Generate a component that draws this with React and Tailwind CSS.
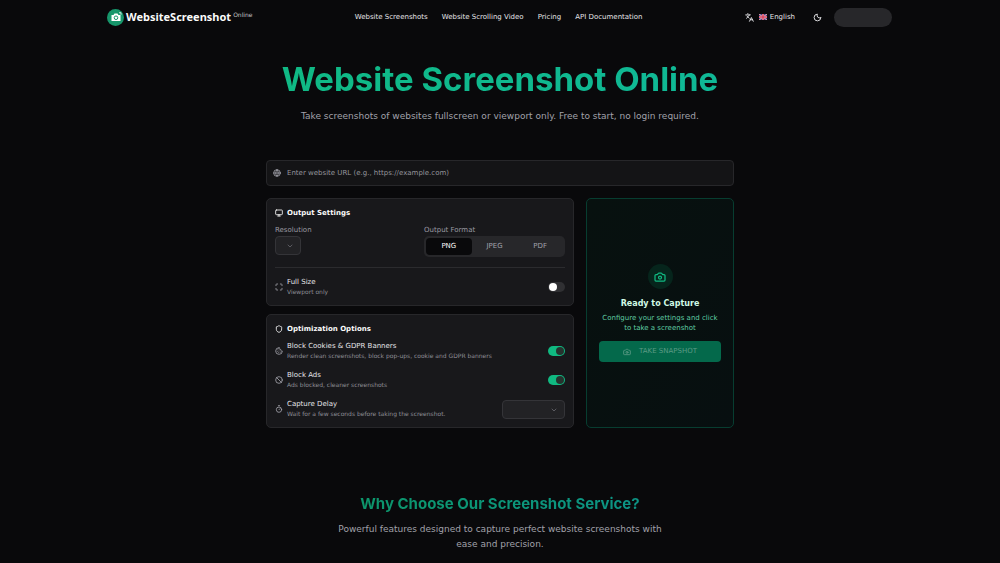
import React, { useState } from "react";
import { Camera, Languages, Moon, Globe, Monitor, ChevronDown, Maximize, Shield, Cookie, Ban, Timer } from "lucide-react";

const navLinks = ["Website Screenshots", "Website Scrolling Video", "Pricing", "API Documentation"];
const formats = ["PNG", "JPEG", "PDF"];

const Flag = () => (
    <svg viewBox="0 0 16 12" className="h-[6px] w-[8px]" aria-hidden="true">
        <path fill="#3b4a8c" d="M0 0h16v12H0z" />
        <path stroke="#f1e4ea" strokeWidth="2" d="M0 0l16 12M16 0L0 12" />
        <path stroke="#d8405c" strokeWidth="1" d="M0 0l16 12M16 0L0 12" />
        <path stroke="#f1e4ea" strokeWidth="4" d="M8 0v12M0 6h16" />
        <path stroke="#d8405c" strokeWidth="3" d="M8 0v12M0 6h16" />
    </svg>
);

const Toggle = ({ id, checked, onChange }) => (
    <input
        id={id}
        type="checkbox"
        role="switch"
        checked={checked}
        onChange={onChange}
        className="flex h-[10px] w-[17px] shrink-0 cursor-pointer appearance-none items-center rounded-full bg-[#303033] px-px before:size-2 before:rounded-full before:bg-white checked:justify-end checked:bg-[#10b981] checked:before:bg-[#27332f]"
    />
);

const SelectBox = ({ id, className }) => (
    <div className={`relative ${className}`}>
        <select id={id} className="block h-[19px] w-full appearance-none rounded-[4px] border border-[#343438] bg-[#222225] text-[7px]">
            <option value=""></option>
        </select>
        <ChevronDown className="pointer-events-none absolute top-[6px] right-[7px] size-2 text-[#77777e]" />
    </div>
);

const CardTitle = ({ icon: Icon, children }) => (
    <h3 className="flex items-center gap-1 text-[7px] leading-3 font-bold text-[#fafafa]">
        <Icon className="size-2" strokeWidth={2.5} />
        {children}
    </h3>
);

const OptionRow = ({ id, icon: Icon, title, text, children }) => (
    <div className="flex h-5 items-center justify-between">
        <label htmlFor={id} className="flex items-center gap-1">
            <Icon className="size-2 text-[#a1a1aa]" strokeWidth={2.5} />
            <span>
                <span className="block text-[7px] leading-[10px] text-[#e4e4e7]">{title}</span>
                <span className="block text-[6px] leading-[10px] text-[#8e8e96]">{text}</span>
            </span>
        </label>
        {children}
    </div>
);

const Header = () => (
    <header className="mx-auto flex h-[34px] w-full max-w-[786px] items-center justify-between">
        <a href="#" className="flex items-center gap-[2px] text-[#fafafa]">
            <span className="flex size-[17px] items-center justify-center rounded-full bg-[#17966b]">
                <svg viewBox="0 0 24 24" className="size-3" aria-hidden="true">
                    <path fill="#fff" d="M3 8h4l2-3h6l2 3h4v12H3z" />
                    <circle cx="12" cy="13.5" r="3.6" fill="none" stroke="#17966b" strokeWidth="2" />
                    <path stroke="#fff" strokeWidth="1.6" d="M18 3.5h4v4" fill="none" />
                </svg>
            </span>
            <span className="font-['Noto_Sans',sans-serif] text-[11px] leading-4 font-bold">WebsiteScreenshot</span>
            <span className="self-start text-[6px] leading-3 text-[#c4c4c8]">Online</span>
        </a>
        <nav className="flex gap-[14px] text-[7px] text-[#e4e4e7]">
            {navLinks.map((link) => (
                <a key={link} href="#">
                    {link}
                </a>
            ))}
        </nav>
        <div className="flex items-center text-[#e4e4e7]">
            <button className="flex items-center gap-[5px] text-[7px]">
                <Languages className="size-[9px]" strokeWidth={2.5} />
                <span className="flex items-center gap-[3px]">
                    <Flag />
                    English
                </span>
            </button>
            <button aria-label="Toggle theme" className="mr-3 ml-[18px]">
                <Moon className="size-[9px]" strokeWidth={2.5} />
            </button>
            <div className="mr-px h-[19px] w-[58px] rounded-full bg-[#27272a]"></div>
        </div>
    </header>
);

const App = () => {
    const [url, setUrl] = useState("");
    const [format, setFormat] = useState("PNG");
    const [fullSize, setFullSize] = useState(false);
    const [blockCookies, setBlockCookies] = useState(true);
    const [blockAds, setBlockAds] = useState(true);

    return (
        <div className="min-h-screen bg-[#09090b] font-['DejaVu_Sans',sans-serif] text-[#fafafa]">
            <Header />

            <main>
                <section className="mx-auto max-w-[600px] pt-6 text-center">
                    <h1 className="bg-linear-to-r from-[#10b981] to-[#10b89a] bg-clip-text font-['Inter',sans-serif] text-[33px] leading-[42px] font-bold text-transparent">
                        Website Screenshot Online
                    </h1>
                    <p className="mt-2 text-[9px] leading-4 text-[#a1a1aa]">
                        Take screenshots of websites fullscreen or viewport only. Free to start, no login required.
                    </p>
                </section>

                {/* capture form */}
                <section className="mx-auto mt-9 max-w-[468px]">
                    <label className="flex h-[26px] items-center gap-[6px] rounded-[4px] border border-[#27272a] bg-[#141416] px-[6px]">
                        <Globe className="size-2 text-[#a1a1aa]" strokeWidth={2.5} />
                        <input
                            type="url"
                            aria-label="Website URL"
                            value={url}
                            onChange={(e) => setUrl(e.target.value)}
                            placeholder="Enter website URL (e.g., https://example.com)"
                            className="min-w-0 flex-1 bg-transparent text-[7px] outline-none placeholder:text-[#94949c]"
                        />
                    </label>

                    <div className="mt-3 grid grid-cols-3 gap-3">
                        <div className="col-span-2 flex flex-col gap-2">
                            <div className="rounded-[5px] border border-[#27272a] bg-[#18181b] p-2">
                                <CardTitle icon={Monitor}>Output Settings</CardTitle>
                                <div className="mt-[5px] grid grid-cols-2 gap-2 text-[7px]">
                                    <div>
                                        <label htmlFor="resolution" className="block leading-3 text-[#9a9aa2]">
                                            Resolution
                                        </label>
                                        <SelectBox id="resolution" className="w-[26px]" />
                                    </div>
                                    <div>
                                        <p className="leading-3 text-[#9a9aa2]">Output Format</p>
                                        <div className="grid h-[21px] grid-cols-3 rounded-[5px] bg-[#27272a] p-[2px]">
                                            {formats.map((f) => (
                                                <button
                                                    key={f}
                                                    onClick={() => setFormat(f)}
                                                    className={format === f ? "rounded-[4px] bg-[#09090b] text-[#fafafa]" : "rounded-[4px] text-[#a1a1aa]"}
                                                >
                                                    {f}
                                                </button>
                                            ))}
                                        </div>
                                    </div>
                                </div>
                                <div className="mt-[10px] border-t border-[#2b2b2e] pt-[9px]">
                                    <OptionRow id="full-size" icon={Maximize} title="Full Size" text="Viewport only">
                                        <Toggle id="full-size" checked={fullSize} onChange={() => setFullSize(!fullSize)} />
                                    </OptionRow>
                                </div>
                            </div>

                            <div className="rounded-[5px] border border-[#27272a] bg-[#18181b] p-2">
                                <CardTitle icon={Shield}>Optimization Options</CardTitle>
                                <div className="mt-[6px] flex flex-col gap-[9px]">
                                    <OptionRow id="cookies" icon={Cookie} title="Block Cookies & GDPR Banners" text="Render clean screenshots, block pop-ups, cookie and GDPR banners">
                                        <Toggle id="cookies" checked={blockCookies} onChange={() => setBlockCookies(!blockCookies)} />
                                    </OptionRow>
                                    <OptionRow id="ads" icon={Ban} title="Block Ads" text="Ads blocked, cleaner screenshots">
                                        <Toggle id="ads" checked={blockAds} onChange={() => setBlockAds(!blockAds)} />
                                    </OptionRow>
                                    <OptionRow id="delay" icon={Timer} title="Capture Delay" text="Wait for a few seconds before taking the screenshot.">
                                        <SelectBox id="delay" className="w-[63px]" />
                                    </OptionRow>
                                </div>
                            </div>
                        </div>

                        <div className="flex flex-col items-center justify-center rounded-[5px] border border-[#073d30] bg-linear-to-br from-[#07110f] to-[#070f10] px-3 text-center">
                            <div className="flex size-[25px] items-center justify-center rounded-full bg-[#06251c]">
                                <Camera className="size-3 text-[#10b981]" strokeWidth={2.5} />
                            </div>
                            <h3 className="mt-2 text-[8px] leading-[14px] font-bold text-[#d1fae5]">Ready to Capture</h3>
                            <p className="mt-[2px] text-[7px] leading-[10px] text-[#5fcba2]">Configure your settings and click to take a screenshot</p>
                            <button disabled className="mt-2 flex h-[21px] w-full items-center justify-center gap-2 rounded-[4px] bg-[#04694b] text-[7px] text-[#5b9a85]">
                                <Camera className="size-2" strokeWidth={2.5} />
                                TAKE SNAPSHOT
                            </button>
                        </div>
                    </div>
                </section>

                <section className="mx-auto mt-16 max-w-[350px] px-1 text-center">
                    <h2 className="bg-linear-to-r from-[#0d9668] to-[#0d9488] bg-clip-text font-['Inter',sans-serif] text-[15px] leading-6 font-bold text-transparent">
                        Why Choose Our Screenshot Service?
                    </h2>
                    <p className="mt-[6px] text-[9px] leading-[15px] text-[#a1a1aa]">
                        Powerful features designed to capture perfect website screenshots with ease and precision.
                    </p>
                </section>
            </main>
        </div>
    );
};

export default App;
